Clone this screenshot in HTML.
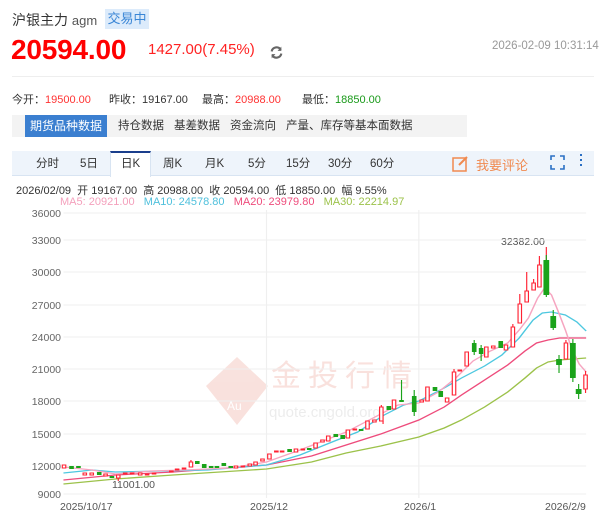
<!DOCTYPE html>
<html><head><meta charset="utf-8"><style>
*{margin:0;padding:0;box-sizing:border-box}
body{width:600px;height:511px;background:#fff;font-family:"Liberation Sans","Noto Sans CJK SC",sans-serif;position:relative;overflow:hidden;color:#333}
.a{position:absolute;white-space:nowrap}
</style></head><body>
<div class="a" style="left:12px;top:10px;font-size:14px;color:#333">沪银主力 <span style="font-size:13px;color:#555">agm</span></div>
<div class="a" style="left:105px;top:9px;width:44px;height:20px;background:#dcebfb;color:#3a86d6;font-size:13px;line-height:20px;text-align:center">交易中</div>
<div class="a" style="left:11px;top:34px;font-size:28px;font-weight:bold;color:#f00;letter-spacing:-0.2px">20594.00</div>
<div class="a" style="left:148px;top:41px;font-size:15px;color:#f22">1427.00(7.45%)</div>
<svg class="a" style="left:269px;top:45px" width="15" height="15" viewBox="0 0 14 14"><path d="M2.5 6A4.6 4.6 0 0 1 11 4.5M11.5 8A4.6 4.6 0 0 1 3 9.5" fill="none" stroke="#666" stroke-width="2"/><path d="M11.5 1.5V5.5H8z M2.5 12.5V8.5H6z" fill="#666"/></svg>
<div class="a" style="left:492px;top:40px;font-size:11.5px;color:#999">2026-02-09 10:31:14</div>
<div class="a" style="left:12px;top:76px;width:582px;height:1px;background:#eee"></div>
<div class="a" style="left:12px;top:91px;font-size:11px;color:#333">今开：<span style="color:#f33">19500.00</span></div>
<div class="a" style="left:109px;top:91px;font-size:11px;color:#333">昨收：19167.00</div>
<div class="a" style="left:202px;top:91px;font-size:11px;color:#333">最高：<span style="color:#f33">20988.00</span></div>
<div class="a" style="left:302px;top:91px;font-size:11px;color:#333">最低：<span style="color:#1a9a1a">18850.00</span></div>
<div class="a" style="left:12px;top:115px;width:455px;height:22px;background:#f3f3f3"></div>
<div class="a" style="left:25px;top:115px;width:82px;height:22px;background:#3b7fd0;color:#fff;font-size:12px;line-height:22px;text-align:center">期货品种数据</div>
<div class="a" style="left:118px;top:115px;font-size:11.5px;line-height:22px;color:#333">持仓数据</div>
<div class="a" style="left:174px;top:115px;font-size:11.5px;line-height:22px;color:#333">基差数据</div>
<div class="a" style="left:230px;top:115px;font-size:11.5px;line-height:22px;color:#333">资金流向</div>
<div class="a" style="left:286px;top:115px;font-size:11.5px;line-height:22px;color:#333">产量、库存等基本面数据</div>
<div class="a" style="left:12px;top:151px;width:582px;height:25px;background:#eef4fb;border-bottom:1px solid #d8e4f2"></div>
<div class="a" style="left:110px;top:151px;width:41px;height:26px;background:#fff;border-top:2px solid #1a3e8c;border-left:1px solid #d8e4f2;border-right:1px solid #d8e4f2"></div>
<div class="a" style="top:156px;left:0;font-size:11.5px;color:#333;line-height:16px">
<span class="a" style="left:36px">分时</span><span class="a" style="left:80px">5日</span><span class="a" style="left:121px">日K</span><span class="a" style="left:163px">周K</span><span class="a" style="left:205px">月K</span><span class="a" style="left:248px">5分</span><span class="a" style="left:286px">15分</span><span class="a" style="left:328px">30分</span><span class="a" style="left:370px">60分</span></div>
<svg class="a" style="left:452px;top:155px" width="17" height="17"><rect x="1" y="3" width="13" height="13" fill="none" stroke="#f08a50" stroke-width="1.5"/><path d="M7 10L15 2" stroke="#f08a50" stroke-width="2"/></svg>
<div class="a" style="left:476px;top:155px;font-size:13px;color:#f08a50">我要评论</div>
<svg class="a" style="left:550px;top:155px" width="15" height="15"><path d="M1 5V1H5M10 1H14V5M14 10V14H10M5 14H1V10" fill="none" stroke="#2a6fc4" stroke-width="1.6"/></svg>
<div class="a" style="left:580px;top:154px;width:2px;height:2px;background:#2a6fc4;box-shadow:0 5px #2a6fc4,0 10px #2a6fc4"></div>
<div class="a" style="left:16px;top:182px;font-size:11px;color:#333">2026/02/09 &nbsp;开 19167.00 &nbsp;高 20988.00 &nbsp;收 20594.00 &nbsp;低 18850.00 &nbsp;幅 9.55%</div>
<div class="a" style="left:60px;top:196px;font-size:11px"><span style="color:#f4a0bc">MA5: 20921.00</span> &nbsp; <span style="color:#4ec0dc">MA10: 24578.80</span> &nbsp; <span style="color:#ee4c7c">MA20: 23979.80</span> &nbsp; <span style="color:#9cc24a">MA30: 22214.97</span></div>
<svg class="a" style="left:0;top:205px" width="600" height="306" viewBox="0 205 600 306">
<g font-size="10.5" fill="#666" text-anchor="end">
<text x="61" y="217">36000</text><text x="61" y="244">33000</text><text x="61" y="276">30000</text><text x="61" y="309">27000</text><text x="61" y="341">24000</text><text x="61" y="373">21000</text><text x="61" y="405">18000</text><text x="61" y="438">15000</text><text x="61" y="470">12000</text><text x="61" y="498">9000</text></g>
<g font-size="10.5" fill="#555"><text x="60" y="510">2025/10/17</text><text x="250" y="510">2025/12</text><text x="404" y="510">2026/1</text><text x="545" y="510">2026/2/9</text><text x="112" y="488">11001.00</text><text x="501" y="245">32382.00</text></g>
<g opacity="0.18"><path d="M237 357L268 386L237 425L206 386Z" fill="#e0604a"/><text x="227" y="410" font-size="12" fill="#fff">Au</text>
<text x="271" y="386" font-size="30" fill="#e0604a" letter-spacing="7">金投行情</text>
<text x="269" y="417" font-size="15" fill="#999">quote.cngold.org</text></g>
<g transform="scale(1.1538,1)">
<g stroke="#efefef" stroke-width="1">
<line x1="55" y1="213" x2="508" y2="213"/><line x1="55" y1="240" x2="508" y2="240"/><line x1="55" y1="272" x2="508" y2="272"/><line x1="55" y1="305" x2="508" y2="305"/><line x1="55" y1="337" x2="508" y2="337"/><line x1="55" y1="369" x2="508" y2="369"/><line x1="55" y1="401" x2="508" y2="401"/><line x1="55" y1="434" x2="508" y2="434"/><line x1="55" y1="466" x2="508" y2="466"/><line x1="55" y1="494" x2="508" y2="494"/>
<line x1="231" y1="210" x2="231" y2="498"/><line x1="363" y1="210" x2="363" y2="498"/></g>
<g fill="none" stroke-width="1.3">
<polyline stroke="#9cc24a" points="55,484 100,479 150,475 231,469 270,462 300,453 330,446 363,437 385,428 400,420 420,407 440,392 455,378 465,368 475,362 485,360 508,358"/>
<polyline stroke="#ee4c7c" points="55,480 100,475 150,472 231,465 270,456 300,445 330,434 363,420 385,407 400,395 420,380 440,365 455,351 465,343 475,340 485,338 508,338"/>
<polyline stroke="#4ec8e0" points="55,473 80,470 100,472 140,471 180,470 231,465 260,455 290,441 310,432 333,415 350,405 363,401 385,388 400,378 420,366 435,355 450,338 462,320 470,313 478,312 490,315 500,322 508,331"/>
<polyline stroke="#f6a5c0" points="55,467 80,470 100,474 130,471 160,470 200,468 231,462 260,450 300,432 330,414 345,405 363,403 380,392 395,378 410,361 425,351 440,343 450,330 458,318 466,298 472,288 478,295 484,312 490,330 496,350 502,364 508,372"/>
</g>
<g stroke-width="1">
<path d="M54 465h3v3h-3zM72 473h3v2h-3zM78 473h3v2h-3zM90 474h3v2h-3zM101 475h3v3h-3zM107 473h3v1h-3zM113 473h3v1h-3zM120 473h3v2h-3zM126 474h3v1h-3zM132 473h3v1h-3zM147 471h3v1h-3zM152 469h3v1h-3zM158 468h3v1h-3zM164 462h3v5h-3zM203 466h3v2h-3zM209 466h3v1h-3zM215 464h3v2h-3zM220 462h3v3h-3zM226 459h3v2h-3zM232 454h3v5h-3zM238 451h3v1h-3zM243 451h3v1h-3zM255 449h3v3h-3zM261 449h3v1h-3zM272 443h3v5h-3zM278 440h3v2h-3zM283 436h3v5h-3zM300 430h3v8h-3zM306 429h3v1h-3zM317 421h3v8h-3zM323 420h3v2h-3zM329 407h3v14h-3zM340 400h3v9h-3zM364 400h3v2h-3zM369 387h3v14h-3zM386 398h3v4h-3zM392 372h3v23h-3zM397 370h3v1h-3zM403 352h3v14h-3zM420 347h3v10h-3zM426 346h3v2h-3zM437 345h3v5h-3zM443 327h3v20h-3zM449 304h3v19h-3zM455 291h3v11h-3zM461 283h3v7h-3zM466 265h3v22h-3zM489 343h3v16h-3zM506 375h3v14h-3z" fill="#fff" stroke="#f23"/>
<path d="M102.5 478v3M165.5 460v2M330.5 405v2M393.5 369v3M444.5 324v3M450.5 294v10M456.5 272v19M462.5 279v4M467.5 256v9M473.5 247v13M490.5 340v3M507.5 371v4M507.5 389v4M332 421v3" stroke="#f23"/>
<path d="M60 466h4v3h-4zM66 466h4v2h-4zM84 472h4v3h-4zM95 476h4v2h-4zM169 461h4v3h-4zM175 464h4v4h-4zM181 466h4v2h-4zM186 466h4v2h-4zM192 463h4v3h-4zM198 466h4v2h-4zM249 449h4v3h-4zM266 448h4v2h-4zM289 434h4v3h-4zM295 435h4v4h-4zM311 429h4v2h-4zM335 406h4v4h-4zM346 400h4v2h-4zM357 396h4v16h-4zM375 387h4v4h-4zM380 391h4v6h-4zM409 343h4v9h-4zM415 348h4v6h-4zM432 341h4v7h-4zM471 260h5v35h-5zM477 316h5v12h-5zM482 359h5v6h-5zM494 343h5v35h-5zM499 389h5v5h-5z" fill="#1aa31a"/>
<path d="M359 390v26M348 380v22M411 340v15M417 345v16M473.5 255v42M479.5 310v20M484.5 355v18M496.5 339v43M501.5 384v15" stroke="#1aa31a"/>
</g></g>
</svg>
</body></html>
